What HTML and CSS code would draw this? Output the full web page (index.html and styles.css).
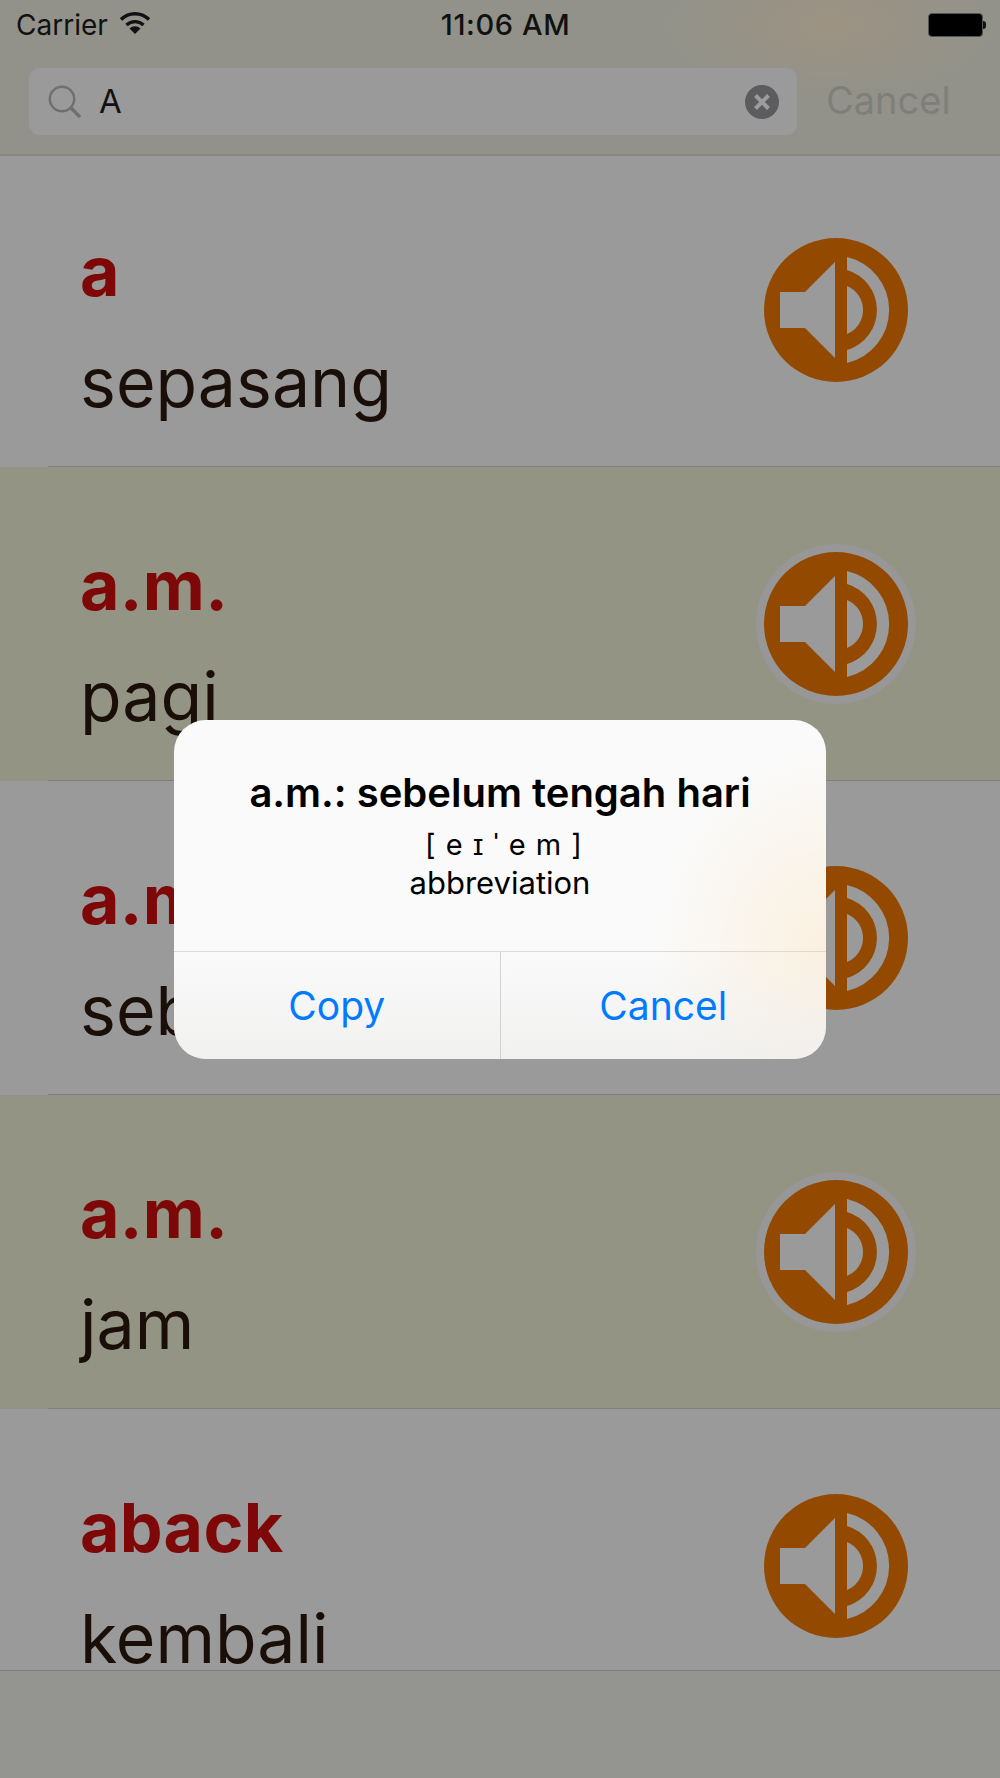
FILE: index.html
```html
<!DOCTYPE html>
<html lang="en">
<head>
  <meta charset="UTF-8">
  <title>Dictionary Search</title>
  <link rel="stylesheet" href="styles.css">
</head>
<body>
  <svg class="defs" width="0" height="0">
    <symbol id="speaker" viewBox="-80 -80 160 160">
      <circle r="72" fill="#934a00"/>
      <path fill="#9a9a9a" d="M-56 -18H-31L-1 -48V48L-31 18H-56Z"/>
      <path fill="#9a9a9a" d="M11 -53A54.4 54.4 0 0 1 11 53V40A41.7 41.7 0 0 0 11 -40Z"/>
      <path fill="#9a9a9a" d="M11 -24A26 26 0 0 1 11 24Z"/>
    </symbol>
  </svg>

  <div class="screen">
    <header class="top-bar">
      <div class="status-bar">
        <div class="status-left">
          <span>Carrier</span>
          <svg class="wifi" width="30" height="22" viewBox="0 0 30 22">
            <path d="M1 7.5A20 20 0 0 1 29 7.5" fill="none" stroke="#111" stroke-width="3.4"/>
            <path d="M6.5 13A12.5 12.5 0 0 1 23.5 13" fill="none" stroke="#111" stroke-width="3.4"/>
            <path d="M9.5 16.5A8 8 0 0 1 20.5 16.5L15 22Z" fill="#111"/>
          </svg>
        </div>
        <div class="clock">11:06 AM</div>
        <div class="battery"><div class="battery-level"></div><div class="battery-nub"></div></div>
      </div>
      <div class="search-row">
        <div class="search-field">
          <svg class="search-icon" width="34" height="34" viewBox="0 0 34 34">
            <circle cx="14" cy="14" r="12.2" fill="none" stroke="#6f6f6f" stroke-width="2.4"/>
            <path d="M22.5 22.5L32 32" stroke="#6f6f6f" stroke-width="3.4"/>
          </svg>
          <span class="search-text">A</span>
          <svg class="clear-icon" width="34" height="34" viewBox="0 0 34 34">
            <circle cx="17" cy="17" r="17" fill="#5c5c5e"/>
            <path d="M10.5 10.5L23.5 23.5M23.5 10.5L10.5 23.5" stroke="#9c9c9c" stroke-width="4"/>
          </svg>
        </div>
        <span class="search-cancel">Cancel</span>
      </div>
    </header>

    <main class="word-list">
      <div class="row">
        <div class="row-inner">
          <div class="word"><div class="word-title">a</div><div class="word-meaning">sepasang</div></div>
          <svg class="speaker"><use href="#speaker"/></svg>
        </div>
      </div>
      <div class="row row-alt">
        <div class="row-inner">
          <div class="word"><div class="word-title">a.m.</div><div class="word-meaning">pagi</div></div>
          <svg class="speaker"><use href="#speaker"/></svg>
        </div>
      </div>
      <div class="row">
        <div class="row-inner">
          <div class="word"><div class="word-title">a.m.</div><div class="word-meaning">sebelum tengah hari</div></div>
          <svg class="speaker"><use href="#speaker"/></svg>
        </div>
      </div>
      <div class="row row-alt">
        <div class="row-inner">
          <div class="word"><div class="word-title">a.m.</div><div class="word-meaning">jam</div></div>
          <svg class="speaker"><use href="#speaker"/></svg>
        </div>
      </div>
      <div class="row">
        <div class="row-inner">
          <div class="word"><div class="word-title">aback</div><div class="word-meaning">kembali</div></div>
          <svg class="speaker"><use href="#speaker"/></svg>
        </div>
      </div>
    </main>

    <footer class="bottom-bar"></footer>

    <div class="alert">
      <div class="alert-body">
        <div class="alert-title">a.m.: sebelum tengah hari</div>
        <div class="alert-phonetic">[ e ɪ ˈ e m ]</div>
        <div class="alert-type">abbreviation</div>
      </div>
      <div class="alert-actions">
        <div class="alert-btn">Copy</div>
        <div class="alert-btn">Cancel</div>
      </div>
    </div>
  </div>
</body>
</html>
```

FILE: styles.css
```css
* {
  box-sizing: border-box;
}

body {
  margin: 0;
  font-family: Inter, "Liberation Sans", sans-serif;
  background-color: #9a9a9a;
}

.defs {
  display: block;
  height: 0;
}

.screen {
  position: relative;
  width: 1000px;
  height: 1778px;
  display: flex;
  flex-direction: column;
  overflow: hidden;
}

/* top bar */
.top-bar {
  position: relative;
  z-index: 1;
  flex: none;
  height: 156px;
  border-bottom: 2px solid #868682;
  background:
    radial-gradient(ellipse 170px 70px at 830px 25px, #9d9383, rgba(157, 147, 131, 0) 100%),
    #92928a;
}

.status-bar {
  height: 52px;
  padding: 0 14px 3px 16px;
  display: flex;
  align-items: center;
  justify-content: space-between;
  color: #111;
}

.status-left {
  width: 249px;
  display: flex;
  align-items: center;
  gap: 12px;
  font-size: 28px;
}

.wifi {
  margin-top: -3px;
}

.clock {
  font-size: 29px;
  font-weight: 500;
  letter-spacing: 0.6px;
}

.battery {
  width: 240px;
  display: flex;
  align-items: center;
  justify-content: flex-end;
}

.battery-level {
  width: 55px;
  height: 24px;
  background-color: #000;
  border: 1px solid #555;
  border-radius: 4px;
}

.battery-nub {
  width: 3px;
  height: 8px;
  background-color: #111;
  border-radius: 0 3px 3px 0;
}

.search-row {
  display: flex;
  align-items: center;
  margin-top: 16px;
  padding-left: 29px;
}

.search-field {
  width: 768px;
  height: 67px;
  padding: 0 18px 0 19px;
  display: flex;
  align-items: center;
  background-color: #9a9a9a;
  border-radius: 11px;
}

.search-icon {
  flex: none;
}

.search-text {
  flex: 1;
  margin-left: 17px;
  padding-bottom: 2px;
  font-size: 33px;
  color: #111;
}

.search-cancel {
  margin-left: 29px;
  padding-bottom: 3px;
  font-size: 38px;
  color: #7f7f79;
}

/* list */
.word-list {
  flex: 1;
  margin-top: -3px;
  overflow: hidden;
}

.row {
  height: 314px;
  background-color: #9a9a9a;
}

.row-alt {
  background-color: #939484;
}

.row-inner {
  height: 100%;
  margin-left: 48px;
  padding: 0 84px 0 32px;
  display: flex;
  align-items: center;
  justify-content: space-between;
  border-bottom: 1px solid #7f7f7f;
}

.word {
  padding-top: 34px;
}

.word-title {
  font-size: 68px;
  font-weight: 700;
  line-height: 72px;
  letter-spacing: 0.3px;
  color: #7e0807;
}

.word-meaning {
  margin-top: 39px;
  font-size: 68px;
  line-height: 72px;
  color: #1a0f08;
  white-space: nowrap;
}

.speaker {
  flex: none;
  width: 160px;
  height: 160px;
  border-radius: 50%;
}

.row-alt .speaker {
  background-color: #979797;
}

.bottom-bar {
  flex: none;
  height: 108px;
  border-top: 1px solid #7f7f7f;
  background-color: #949491;
}

/* alert */
.alert {
  position: absolute;
  left: 174px;
  top: 720px;
  width: 652px;
  height: 339px;
  display: flex;
  flex-direction: column;
  border-radius: 32px;
  overflow: hidden;
  background:
    radial-gradient(ellipse 170px 200px at 100% 68%, #faf0df, rgba(250, 240, 223, 0) 100%),
    #fafafa;
  color: #000;
  text-align: center;
}

.alert-body {
  height: 232px;
  padding-top: 50px;
  border-bottom: 1px solid #dcdad6;
}

.alert-title {
  font-size: 40px;
  font-weight: 600;
  line-height: 46px;
}

.alert-phonetic {
  margin-top: 12px;
  padding-left: 8px;
  font-size: 29px;
  line-height: 34px;
  letter-spacing: 1px;
}

.alert-type {
  margin-top: 4px;
  font-size: 31px;
  line-height: 34px;
}

.alert-actions {
  flex: 1;
  display: flex;
  background: linear-gradient(rgba(242, 241, 240, 0), rgba(238, 237, 236, 0.7));
}

.alert-btn {
  flex: 1;
  display: flex;
  align-items: center;
  justify-content: center;
  font-size: 39px;
  color: #007aff;
}

.alert-btn + .alert-btn {
  border-left: 1px solid #d4d3d1;
}
```
